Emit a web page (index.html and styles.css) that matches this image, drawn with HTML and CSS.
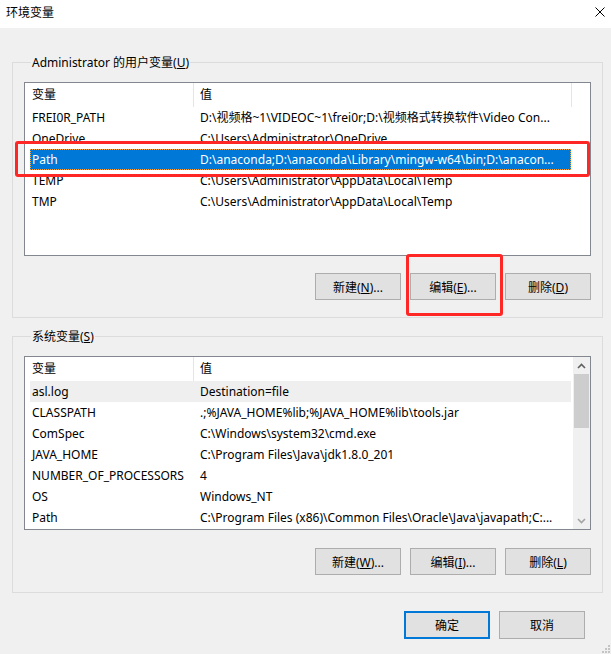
FILE: index.html
```html
<!DOCTYPE html>
<html>

<head>
    <meta charset="UTF-8">
    <title>环境变量</title>
    <link rel="stylesheet" href="styles.css">
</head>

<body>
    <div class="window">

        <!-- ========== Title bar ========== -->
        <div class="titlebar">
            <span class="title">环境变量</span>
            <svg class="close" width="10" height="10" viewBox="0 0 10 10">
                <path d="M0.5 0.5L9.5 9.5M9.5 0.5L0.5 9.5" stroke="#000" stroke-width="1" fill="none" />
            </svg>
        </div>

        <div class="content">

            <!-- ========== User variables ========== -->
            <div class="group">
                <div class="groupLabel">Administrator 的用户变量(<u>U</u>)</div>
                <div class="list">
                    <div class="listBody">
                        <div class="listHead">
                            <div class="headCell name">变量</div>
                            <div class="headCell value fixed">值</div>
                            <div class="headCell rest"></div>
                        </div>
                        <div class="row"><span class="cellName">FREI0R_PATH</span><span class="cellValue">D:\视频格~1\VIDEOC~1\frei0r;D:\视频格式转换软件\Video Con...</span></div>
                        <div class="row"><span class="cellName">OneDrive</span><span class="cellValue">C:\Users\Administrator\OneDrive</span></div>
                        <div class="row selected"><span class="cellName">Path</span><span class="cellValue">D:\anaconda;D:\anaconda\Library\mingw-w64\bin;D:\anacon...</span></div>
                        <div class="row"><span class="cellName">TEMP</span><span class="cellValue">C:\Users\Administrator\AppData\Local\Temp</span></div>
                        <div class="row"><span class="cellName">TMP</span><span class="cellValue">C:\Users\Administrator\AppData\Local\Temp</span></div>
                    </div>
                </div>
                <div class="groupButtons">
                    <button class="btn">新建(<u>N</u>)...</button>
                    <button class="btn">编辑(<u>E</u>)...</button>
                    <button class="btn">删除(<u>D</u>)</button>
                </div>
            </div>

            <!-- ========== System variables ========== -->
            <div class="group second">
                <div class="groupLabel">系统变量(<u>S</u>)</div>
                <div class="list">
                    <div class="listBody">
                        <div class="listHead">
                            <div class="headCell name">变量</div>
                            <div class="headCell value">值</div>
                        </div>
                        <div class="row hot"><span class="cellName">asl.log</span><span class="cellValue">Destination=file</span></div>
                        <div class="row"><span class="cellName">CLASSPATH</span><span class="cellValue">.;%JAVA_HOME%lib;%JAVA_HOME%lib\tools.jar</span></div>
                        <div class="row"><span class="cellName">ComSpec</span><span class="cellValue">C:\Windows\system32\cmd.exe</span></div>
                        <div class="row"><span class="cellName">JAVA_HOME</span><span class="cellValue">C:\Program Files\Java\jdk1.8.0_201</span></div>
                        <div class="row"><span class="cellName">NUMBER_OF_PROCESSORS</span><span class="cellValue">4</span></div>
                        <div class="row"><span class="cellName">OS</span><span class="cellValue">Windows_NT</span></div>
                        <div class="row"><span class="cellName">Path</span><span class="cellValue">C:\Program Files (x86)\Common Files\Oracle\Java\javapath;C:...</span></div>
                    </div>
                    <div class="scrollbar">
                        <div class="sbButton">
                            <svg width="9" height="6" viewBox="0 0 9 6">
                                <path d="M1 5L4.5 1.5L8 5" stroke="#606060" stroke-width="1.6" fill="none" />
                            </svg>
                        </div>
                        <div class="sbThumb"></div>
                        <div class="sbTrack"></div>
                        <div class="sbButton">
                            <svg width="9" height="6" viewBox="0 0 9 6">
                                <path d="M1 1L4.5 4.5L8 1" stroke="#a3a3a3" stroke-width="1.6" fill="none" />
                            </svg>
                        </div>
                    </div>
                </div>
                <div class="groupButtons">
                    <button class="btn">新建(<u>W</u>)...</button>
                    <button class="btn">编辑(<u>I</u>)...</button>
                    <button class="btn">删除(<u>L</u>)</button>
                </div>
            </div>

            <!-- ========== OK / Cancel ========== -->
            <div class="dialogButtons">
                <button class="btn default">确定</button>
                <button class="btn">取消</button>
            </div>
        </div>

        <!-- red highlight marks drawn over the dialog -->
        <div class="mark markRow"></div>
        <div class="mark markEdit"></div>

        <svg class="grip" width="8" height="8" viewBox="0 0 8 8">
            <rect x="6" y="0" width="2" height="2" fill="#c4c4c4" />
            <rect x="3" y="3" width="2" height="2" fill="#c4c4c4" />
            <rect x="6" y="3" width="2" height="2" fill="#c4c4c4" />
            <rect x="0" y="6" width="2" height="2" fill="#c4c4c4" />
            <rect x="3" y="6" width="2" height="2" fill="#c4c4c4" />
            <rect x="6" y="6" width="2" height="2" fill="#c4c4c4" />
        </svg>
    </div>
</body>

</html>
```

FILE: styles.css
```css
* {
    font-family: "Noto Sans", "Noto Sans CJK SC", sans-serif;
    margin: 0;
    padding: 0;
    box-sizing: border-box;
}

:root {
    --face: #f0f0f0;
    --blue: #0078d7;
    --line: #dcdcdc;
    --frame: #828790;
    --button: #e1e1e1;
    --buttonLine: #adadad;
    --red: #ff2626;
}

body {
    background: var(--face);
    font-size: 12px;
    color: #000;
}

.window {
    position: relative;
    width: 611px;
    height: 654px;
    overflow: hidden;
    background: var(--face);
}

.titlebar {
    height: 28px;
    background: #fff;
    display: flex;
    align-items: center;
    justify-content: space-between;
    padding: 0 6px 4px 6px;
}

.title {
    font-size: 12px;
}

.content {
    padding: 34px 8px 0 12px;
}

.group {
    border: 1px solid var(--line);
    padding: 0 11px 17px 11px;
}

.group.second {
    margin-top: 18px;
}

.groupLabel {
    display: table;
    margin: -9px 0 0 7px;
    padding: 0 1px;
    line-height: 17px;
    background: var(--face);
}

.list {
    margin-top: 11px;
    height: 174px;
    border: 1px solid var(--frame);
    background: #fff;
    display: flex;
}

.listBody {
    flex: 1;
    display: flex;
    flex-direction: column;
}

.listHead {
    display: flex;
    height: 24px;
}

.headCell {
    line-height: 24px;
    padding-left: 7px;
}

.headCell.name {
    width: 169px;
    border-right: 1px solid #e5e5e5;
}

.headCell.value {
    flex: 1;
    padding-left: 6px;
}

.headCell.value.fixed {
    flex: none;
    width: 378px;
    border-right: 1px solid #e5e5e5;
}

.headCell.rest {
    flex: 1;
}

.row {
    display: flex;
    width: 541px;
    height: 21px;
    line-height: 21px;
    margin-left: 5px;
    white-space: nowrap;
}

.row.selected {
    background: var(--blue);
    color: #fff;
    outline: 1px dotted #f3a550;
    outline-offset: -1px;
}

.row.hot {
    background: #efefef;
}

.cellName {
    width: 170px;
    padding-left: 2px;
}

.cellValue {
    flex: 1;
    overflow: hidden;
}

.scrollbar {
    width: 17px;
    background: var(--face);
    display: flex;
    flex-direction: column;
}

.sbButton {
    height: 17px;
    display: flex;
    align-items: center;
    justify-content: center;
}

.sbThumb {
    height: 54px;
    margin: 0 1px;
    background: #cdcdcd;
}

.sbTrack {
    flex: 1;
}

.groupButtons {
    display: flex;
    justify-content: flex-end;
    gap: 9px;
    margin-top: 17px;
}

.group.second .groupButtons {
    margin-top: 18px;
}

.btn {
    width: 86px;
    height: 27px;
    background: var(--button);
    border: 1px solid var(--buttonLine);
    font-family: "Noto Sans", "Noto Sans CJK SC", sans-serif;
    font-size: 12px;
    color: #000;
}

.dialogButtons {
    display: flex;
    justify-content: flex-end;
    gap: 9px;
    margin-top: 18px;
    padding-right: 18px;
}

.dialogButtons .btn {
    height: 28px;
}

.btn.default {
    border: 2px solid var(--blue);
}

.mark {
    position: absolute;
    border: 3px solid var(--red);
    border-radius: 3px;
}

.markRow {
    left: 15px;
    top: 141px;
    width: 575px;
    height: 36px;
}

.markEdit {
    left: 406px;
    top: 254px;
    width: 97px;
    height: 62px;
}

.grip {
    position: absolute;
    right: 1px;
    bottom: 1px;
}
```
